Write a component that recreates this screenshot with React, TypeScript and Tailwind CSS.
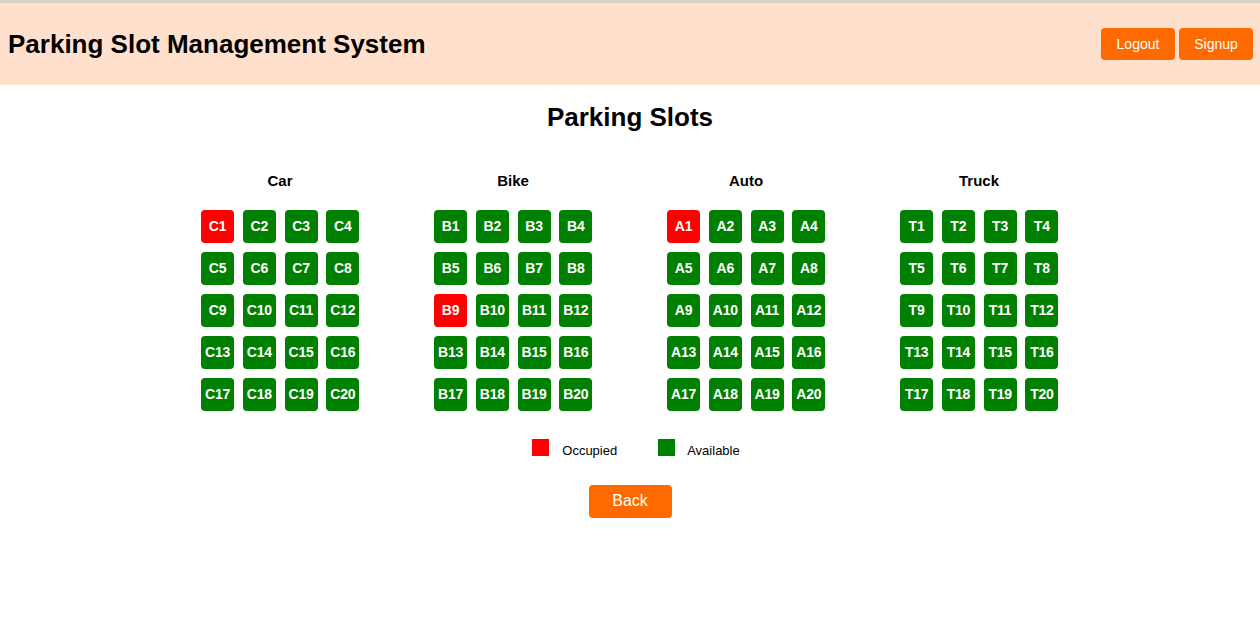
import React from "react";

const categories = [
  { name: "Car", prefix: "C", occupied: [1] },
  { name: "Bike", prefix: "B", occupied: [9] },
  { name: "Auto", prefix: "A", occupied: [1] },
  { name: "Truck", prefix: "T", occupied: [] as number[] },
];

export default function App() {
  return (
    <div className="min-h-screen bg-white font-['Liberation_Sans',Arial,sans-serif] text-black">
      <header className="border-t-[3px] border-[#d9d0c8] bg-[#ffe0cc] h-[85px] flex items-center justify-between pl-[8px] pr-[7px]">
        <h1 className="text-[26px] font-bold leading-none">Parking Slot Management System</h1>
        <div className="flex gap-[4px]">
          <button className="w-[74px] h-[32px] rounded-[4px] bg-[#ff6a00] text-white text-[14px]">Logout</button>
          <button className="w-[74px] h-[32px] rounded-[4px] bg-[#ff6a00] text-white text-[14px]">Signup</button>
        </div>
      </header>
      <main className="flex flex-col items-center">
        <h2 className="text-[26px] font-bold leading-none mt-[19px]">Parking Slots</h2>
        <div className="flex gap-[75px] mt-[43px] mr-[1px]">
          {categories.map((c) => (
            <div key={c.name} className="w-[158px] flex flex-col items-center">
              <div className="text-[15px] font-bold leading-none">{c.name}</div>
              <div className="grid grid-cols-4 gap-[9px] mt-[22px]">
                {Array.from({ length: 20 }, (_, i) => i + 1).map((n) => (
                  <div
                    key={n}
                    className={`w-[33px] h-[33px] rounded-[4px] flex items-center justify-center text-white text-[14px] font-bold tracking-[-0.3px] ${
                      c.occupied.includes(n) ? "bg-[#ff0000]" : "bg-[#008000]"
                    }`}
                  >
                    {c.prefix}
                    {n}
                  </div>
                ))}
              </div>
            </div>
          ))}
        </div>
        <div className="flex items-center mt-[24px] text-[13px] ml-[12px]">
          <span className="w-[17px] h-[17px] bg-[#ff0000]"></span>
          <span className="ml-[13px] mt-[6px]">Occupied</span>
          <span className="w-[17px] h-[17px] bg-[#008000] ml-[41px]"></span>
          <span className="ml-[12px] mt-[6px]">Available</span>
        </div>
        <button className="mt-[24px] w-[83px] h-[33px] rounded-[4px] bg-[#ff6a00] text-white text-[16px]">Back</button>
      </main>
    </div>
  );
}
